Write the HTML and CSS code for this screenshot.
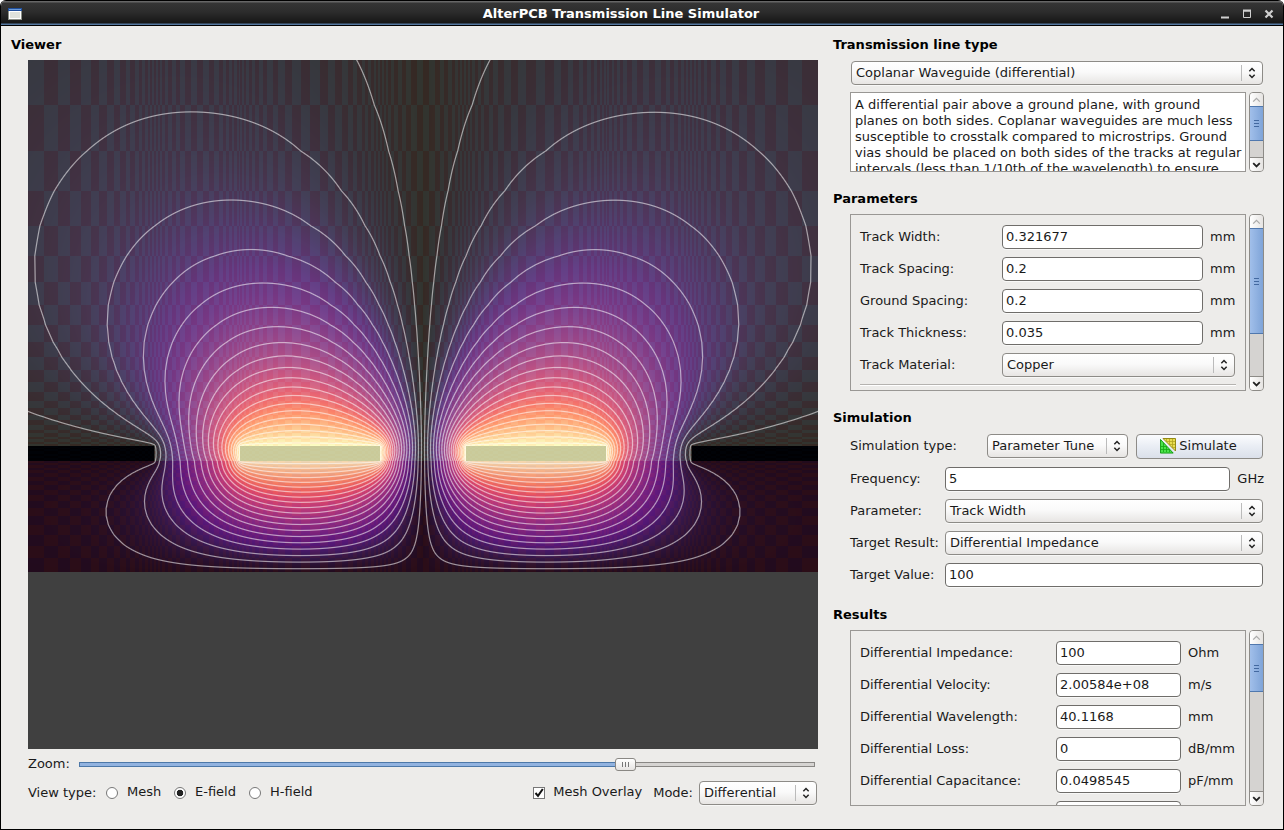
FILE: index.html
```html
<!DOCTYPE html>
<html lang="en">
<head>
<meta charset="utf-8">
<title>AlterPCB Transmission Line Simulator</title>
<link rel="stylesheet" href="styles.css">
</head>
<body>
<svg class="defs" width="0" height="0">
  <symbol id="updown" viewBox="0 0 9 14"><path d="M1.5 5 4.5 2 7.5 5M1.5 9 4.5 12 7.5 9" fill="none" stroke="#222" stroke-width="1.7"/></symbol>
  <symbol id="up" viewBox="0 0 9 6"><path d="M1.2 4.6 4.5 1.4 7.8 4.6" fill="none" stroke="#aaa" stroke-width="1.3"/></symbol>
  <symbol id="down" viewBox="0 0 9 6"><path d="M1.2 1.2 4.5 4.4 7.8 1.2" fill="none" stroke="#222" stroke-width="1.8"/></symbol>
</svg>
<div class="window">
  <header class="titlebar">
    <svg class="app-icon" width="14" height="12" viewBox="0 0 14 12"><rect width="14" height="12" fill="#8b8f86"/><rect width="14" height="3" fill="#1f4f9c"/><rect x="1" y="1" width="12" height="1" fill="#6c9ad8"/><rect x="1" y="3" width="12" height="8" fill="#fff"/><rect x="2" y="4" width="10" height="6" fill="#dfe2dc"/></svg>
    <h1 class="title">AlterPCB Transmission Line Simulator</h1>
    <svg class="win-buttons" width="54" height="12" viewBox="0 0 54 12"><path d="M1 9.5h8" stroke="#d0d0d0" stroke-width="2"/><path d="M23.5 3h7v6.500h-7z" fill="none" stroke="#d0d0d0"/><path d="M23 2.500h8" stroke="#d0d0d0" stroke-width="2"/><path d="M45.500 2.500l7 7M52.500 2.500l-7 7" stroke="#d0d0d0" stroke-width="2.200"/></svg>
  </header>
  <main class="content">
    <section class="left">
      <h2>Viewer</h2>
      <canvas id="field" class="viewer" width="790" height="689"></canvas>
      <div class="zoom-row"><span class="zoom-label">Zoom:</span>
        <div class="slider"><div class="slider-fill"></div><div class="slider-handle"><i></i><i></i><i></i></div><div class="slider-rest"></div></div>
      </div>
      <div class="view-row">
        <span class="view-label">View type:</span>
        <span class="radio"></span><span class="opt mesh">Mesh</span>
        <span class="radio on"></span><span class="opt efield">E-field</span>
        <span class="radio"></span><span class="opt">H-field</span>
        <span class="check"><svg width="12" height="12" viewBox="0 0 12 12"><path d="M2.500 6 5 8.800 9.800 2" fill="none" stroke="#111" stroke-width="2"/></svg></span>
        <span class="opt overlay">Mesh Overlay</span><span class="mode">Mode:</span>
        <div class="combo mode-combo"><span>Differential</span><svg><use href="#updown"/></svg></div>
      </div>
    </section>
    <section class="right">
      <h2>Transmission line type</h2>
      <div class="combo type-combo"><span>Coplanar Waveguide (differential)</span><svg><use href="#updown"/></svg></div>
      <div class="scroll-area desc-area">
        <div class="desc">A differential pair above a ground plane, with ground<br>planes on both sides. Coplanar waveguides are much less<br>susceptible to crosstalk compared to microstrips. Ground<br>vias should be placed on both sides of the tracks at regular<br>intervals (less than 1/10th of the wavelength) to ensure</div>
        <div class="scrollbar"><b><svg><use href="#up"/></svg></b><div class="thumb t1"><i></i><i></i><i></i></div><b class="end"><svg><use href="#down"/></svg></b></div>
      </div>
      <h2 class="h-params">Parameters</h2>
      <div class="scroll-area params-area">
        <div class="panel params">
          <div class="row"><label>Track Width:</label><span class="input">0.321677</span><em>mm</em></div>
          <div class="row"><label>Track Spacing:</label><span class="input">0.2</span><em>mm</em></div>
          <div class="row"><label>Ground Spacing:</label><span class="input">0.2</span><em>mm</em></div>
          <div class="row"><label>Track Thickness:</label><span class="input">0.035</span><em>mm</em></div>
          <div class="row"><label>Track Material:</label><div class="combo"><span>Copper</span><svg><use href="#updown"/></svg></div></div>
          <hr>
        </div>
        <div class="scrollbar"><b><svg><use href="#up"/></svg></b><div class="thumb t2"><i></i><i></i><i></i></div><b class="end"><svg><use href="#down"/></svg></b></div>
      </div>
      <h2 class="h-sim">Simulation</h2>
      <div class="sim">
        <div class="row first"><label>Simulation type:</label><div class="combo tune"><span>Parameter Tune</span><svg><use href="#updown"/></svg></div>
          <button class="simulate"><svg width="16" height="16" viewBox="0 0 16 16"><path d="M.5 1v14.500H15z" transform="translate(0 .5) scale(.88 .94)" fill="#4be24b" stroke="#0a960a"/><path d="M3 .500H15.500V13z" fill="#e8de50" stroke="#948a14"/><path d="M1 8.500h5M1 11.500h8M3.500 5v9M6.500 8v6M9.500 11v3" stroke="#12a812" stroke-width=".8"/><path d="M7 3.500h8M10 6.500h5M12 9.500h3M6.500 1v3M9.500 1v6M12.500 1v9" stroke="#b3a521" stroke-width=".8"/></svg>Simulate</button></div>
          <div class="row"><label>Frequency:</label><span class="input">5</span><em>GHz</em></div>
          <div class="row"><label>Parameter:</label><div class="combo"><span>Track Width</span><svg><use href="#updown"/></svg></div></div>
          <div class="row"><label>Target Result:</label><div class="combo"><span>Differential Impedance</span><svg><use href="#updown"/></svg></div></div>
          <div class="row"><label>Target Value:</label><span class="input">100</span></div>
      </div>
      <h2 class="h-results">Results</h2>
      <div class="scroll-area results-area">
        <div class="panel results">
          <div class="row"><label>Differential Impedance:</label><span class="input">100</span><em>Ohm</em></div>
          <div class="row"><label>Differential Velocity:</label><span class="input">2.00584e+08</span><em>m/s</em></div>
          <div class="row"><label>Differential Wavelength:</label><span class="input">40.1168</span><em>mm</em></div>
          <div class="row"><label>Differential Loss:</label><span class="input">0</span><em>dB/mm</em></div>
          <div class="row"><label>Differential Capacitance:</label><span class="input">0.0498545</span><em>pF/mm</em></div>
          <div class="row"><label></label><span class="input"></span></div>
        </div>
        <div class="scrollbar"><b><svg><use href="#up"/></svg></b><div class="thumb t3"><i></i><i></i><i></i></div><b class="end"><svg><use href="#down"/></svg></b></div>
      </div>
    </section>
  </main>
</div>
<script src="field.js"></script>
</body>
</html>
```
FILE: styles.css
```css
* { box-sizing: border-box; }
body { margin: 0; background: #fff; font: 13px/16px "DejaVu Sans", sans-serif; color: #1a1a1a; }
.defs { position: absolute; }
.window { width: 1284px; height: 830px; background: #edecea; border: 1px solid #000; border-top: 0; border-radius: 6px 6px 0 0; overflow: hidden; }
.titlebar { height: 26px; margin: 0 -1px; padding: 2px 10px 0 8px; display: flex; align-items: center; justify-content: space-between; background: linear-gradient(#000 0 1px, #666 1px 2px, #353535 3px, #2c2c2c 12px, #161616 23px, #54779f 24px 25px, #000 25px); }
.title { margin: 0; font-size: 13px; line-height: 16px; color: #fff; }
.win-buttons { display: block; }
.content { display: grid; grid-template-columns: 822px 1fr; height: 803px; }
h2 { margin: 0; font-size: 13px; line-height: 16px; color: #000; }
.left { padding: 11px 5px 0 10px; }
.left h2 { height: 23px; }
.viewer { display: block; margin-left: 17px; background: #404040; }
.zoom-row { display: flex; align-items: center; margin: 7px 0 0 17px; height: 17px; padding-right: 3px; }
.zoom-label { margin-bottom: 2px; }
.slider { flex: 1; display: flex; align-items: center; margin-left: 9px; }
.slider-fill { width: 536px; height: 5px; background: #92b3e0; border: 1px solid #4d78a8; border-right: 0; }
.slider-handle { width: 21px; height: 13px; border: 1px solid #8a8884; border-radius: 3px; background: linear-gradient(#fff, #e6e4e2); display: flex; justify-content: center; align-items: center; gap: 2px; }
.slider-handle i { width: 1px; height: 5px; background: #777; }
.slider-rest { flex: 1; height: 5px; border: 1px solid #898784; border-left: 0; background: #d6d4d2; }
.view-row { display: flex; align-items: center; height: 24px; margin: 8px 1px 0 17px; }
.view-label { width: 78px; }
.radio { width: 12px; height: 12px; border: 1px solid #777; border-radius: 50%; background: #fff; margin-bottom: 1px; }
.radio.on { background: radial-gradient(#222 0 3px, #fff 3.600px); }
.opt { margin: 0 0 2px 9px; }
.mesh { width: 47px; } .efield { width: 54px; }
.check { margin: 0 0 1px auto; width: 12px; height: 12px; border: 1px solid #777; background: #fff; display: flex; align-items: center; justify-content: center; }
.check svg { flex: none; }
.overlay { margin-left: 8px; }
.mode { margin: 0 6px 0 11px; }
.combo { height: 24px; border: 1px solid #8d8b87; border-radius: 4px; background: linear-gradient(#fff, #fafafa 45%, #e7e5e3); display: flex; align-items: center; justify-content: space-between; padding: 0 6px 0 4px; flex: 1; box-shadow: 0 1px 0 #f8f8f7; color: #1a1a1a; }
.combo svg { width: 15px; height: 16px; padding-left: 6px; border-left: 1px solid #bbb; overflow: visible; }
.mode-combo { flex: 0 0 118px; }
.right { padding: 11px 19px 0 10px; }
.type-combo { margin: 8px 1px 0 18px; }
.scroll-area { display: flex; gap: 3px; margin: 7px 0 0 17px; }
.desc-area { height: 80px; }
.desc { flex: 1; width: 0; border: 1px solid #999794; background: #fff; padding: 4px; overflow: hidden; white-space: nowrap; }
.scrollbar { width: 15px; flex: none; border: 1px solid #8d8b87; border-radius: 4px; background: #d5d3d1; display: flex; flex-direction: column; overflow: hidden; }
.scrollbar b { height: 13px; flex: none; display: flex; align-items: center; justify-content: center; background: linear-gradient(90deg, #fff, #e6e4e2); }
.scrollbar b svg { width: 9px; height: 6px; }
.scrollbar .end { margin-top: auto; border-top: 1px solid #8d8b87; height: 14px; }
.thumb { flex: none; border: 1px solid #5078ae; border-width: 1px 0; background: linear-gradient(90deg, #a1bfea, #7fa4d8); display: flex; flex-direction: column; gap: 2px; align-items: center; justify-content: center; }
.thumb i { width: 5px; height: 1px; background: #4369a0; }
.t1 { height: 35px; } .t2 { height: 106px; } .t3 { height: 48px; }
.h-params { margin-top: 19px; }
.scroll-area.params-area { height: 177px; margin-top: 7px; }
.panel { flex: 1; border: 1px solid #999794; padding: 10px 9px 0; overflow: hidden; display: flex; flex-direction: column; gap: 8px; }
.row { display: flex; align-items: center; height: 24px; flex: none; }
.row label { flex: none; width: 142px; color: #1a1a1a; }
.input { height: 24px; padding: 3px; border: 1px solid #6f6d6a; border-radius: 4px; background: #fff; flex: 1; box-shadow: 0 1px 0 #f8f8f7; }
.row em { font-style: normal; margin-left: 7px; }
.params .row em { width: 27px; margin-right: -1px; }
.params .combo { margin-right: 1px; }
.params hr { margin: -1px 0 0; border: 0; border-top: 1px solid #b5b3b0; border-bottom: 1px solid #fff; height: 2px; flex: none; width: 376px; }
.h-sim { margin-top: 19px; }
.sim { margin: 8px 1px 0 17px; display: flex; flex-direction: column; gap: 8px; }
.sim .row label { width: 95px; }
.sim .row.first { height: 25px; align-items: flex-start; }
.sim .row.first label { width: 137px; padding-top: 4px; }
.sim em { margin-right: -1px; }
.simulate { width: 127px; height: 25px; margin-left: 8px; padding: 0 2px 2px 0; border: 1px solid #8d8b87; border-radius: 4px; background: linear-gradient(#fbfcfe, #e9edf4 50%, #dbe0ea); font: inherit; color: #1a1a1a; display: flex; align-items: center; justify-content: center; gap: 3px; }
.tune { flex: 0 0 141px; }
.h-results { margin-top: 20px; }
.scroll-area.results-area { height: 176px; margin-top: 7px; }
.results .row label { width: 196px; }
.results .input { flex: 0 0 125px; }
```
FILE: field.js
```js
// Solves the Laplace equation for the coplanar pair on a graded mesh and paints
// potential, mesh overlay and equipotential lines.
(function () {
  var W = 790, H = 512;
  var T = 386, B = 401.3;
  var G0 = 126, A0 = 212.3, A1 = 352, C0 = 438, C1 = 577.7, G1 = 664;

  function grow(len, g, s) {
    var out = [0], p = 0;
    while (p < len) { p += s; s *= 1 + g; out.push(p); }
    var k = len / p;
    return out.map(function (v) { return v * k; });
  }
  function both(a, b) {
    var h = grow((b - a) / 2, 0.125, 1.8), out = [];
    h.forEach(function (v) { out.push(a + v); });
    for (var i = h.length - 2; i >= 0; i--) out.push(b - h[i]);
    return out;
  }
  function outward(a, visible, extra, sign, g, s0) {
    var h = grow(visible, g, s0), s = h[h.length - 1] - h[h.length - 2], p = visible;
    while (p < visible + extra) { s *= 1 + g; p += s; h.push(p); }
    return h.map(function (v) { return a + sign * v; });
  }
  function join() {
    var out = [];
    Array.prototype.forEach.call(arguments, function (arr) {
      arr.forEach(function (v) { if (!out.length || v > out[out.length - 1] + 0.01) out.push(v); });
    });
    return out;
  }
  var xs = join(outward(G0, G0, 900, -1, 0.125, 1.9).reverse(), both(G0, A0), both(A0, A1), both(A1, C0), both(C0, C1), both(C1, G1), outward(G1, W - G1, 900, 1, 0.125, 1.9));
  var ys = join(outward(T, 295, 1000, -1, 0.149, 1.88).reverse(), both(T, B), outward(B, H - B, 0, 1, 0.125, 1.9));
  var nx = xs.length, ny = ys.length, n = nx * ny;
  var V = new Float64Array(n), fixed = new Uint8Array(n), e = 0.02;
  for (var j = 0; j < ny; j++) for (var i = 0; i < nx; i++) {
    var k = j * nx + i, x = xs[i], y = ys[j], inY = y > T - e && y < B + e;
    if (j === ny - 1 || j === 0 || i === 0 || i === nx - 1) fixed[k] = 1;
    if (inY && (x < G0 + e || x > G1 - e)) fixed[k] = 1;
    if (inY && x > A0 - e && x < A1 + e) { fixed[k] = 1; V[k] = 1; }
    if (inY && x > C0 - e && x < C1 + e) { fixed[k] = 1; V[k] = -1; }
  }
  function eps(j) { return (ys[j] + ys[j + 1]) / 2 > B ? 4.5 : 1; }
  var cw = new Float64Array(n), ce = new Float64Array(n), cn = new Float64Array(n), cs = new Float64Array(n);
  for (j = 1; j < ny - 1; j++) for (i = 1; i < nx - 1; i++) {
    k = j * nx + i;
    var hw = xs[i] - xs[i - 1], he = xs[i + 1] - xs[i], hn = ys[j] - ys[j - 1], hs = ys[j + 1] - ys[j];
    var en = eps(j - 1), es = eps(j), v = (en * hn + es * hs) / 2;
    var a = v / hw, b = v / he, c = en * (hw + he) / 2 / hn, d = es * (hw + he) / 2 / hs, t = a + b + c + d;
    cw[k] = a / t; ce[k] = b / t; cn[k] = c / t; cs[k] = d / t;
  }
  for (var it = 0; it < 1500; it++) for (j = 1; j < ny - 1; j++) for (i = 1; i < nx - 1; i++) {
    k = j * nx + i;
    if (!fixed[k]) V[k] += 1.9 * (cw[k] * V[k - 1] + ce[k] * V[k + 1] + cn[k] * V[k - nx] + cs[k] * V[k + nx] - V[k]);
  }

  var MAP = [[0,0,4],[7,6,28],[21,14,54],[40,17,89],[62,15,114],[81,18,124],[101,26,128],[121,34,130],[140,41,129],[161,48,126],[183,55,121],[202,62,114],[222,73,104],[237,89,95],[247,112,92],[252,137,97],[254,159,109],[254,183,126],[254,207,146],[253,231,169],[252,253,191]];
  function colour(v) {
    var t = Math.min(Math.abs(v), 1) * 20, i = Math.min(19, Math.floor(t)), f = t - i;
    return [0, 1, 2].map(function (c) { return MAP[i][c] * (1 - f) + MAP[i + 1][c] * f; });
  }
  function index(arr) {
    return function (p) { var i = 0; while (i < arr.length - 2 && arr[i + 1] <= p) i++; return i; };
  }
  var fx = index(xs), fy = index(ys), col = [];
  for (i = 0; i < W; i++) col.push(fx(i + 0.5));
  var ctx = document.getElementById('field').getContext('2d');
  var img = ctx.createImageData(W, H);
  for (var py = 0; py < H; py++) {
    j = fy(py + 0.5);
    var hy = ys[j + 1] - ys[j], q = (py + 0.5 - ys[j]) / hy;
    for (var px = 0; px < W; px++) {
      i = col[px]; k = j * nx + i;
      var hx = xs[i + 1] - xs[i], p = (px + 0.5 - xs[i]) / hx;
      var v00 = V[k], v10 = V[k + 1], v01 = V[k + nx], v11 = V[k + nx + 1];
      var val = (v00 * (1 - p) + v10 * p) * (1 - q) + (v01 * (1 - p) + v11 * p) * q;
      var gx = ((v10 - v00) * (1 - q) + (v11 - v01) * q) / hx, gy = ((v01 - v00) * (1 - p) + (v11 - v10) * p) / hy;
      var g = Math.sqrt(gx * gx + gy * gy), rgb = colour(val);
      var xx = px + 0.5, yy = py + 0.5;
      var metal = yy > T && yy < B && (xx < G0 || xx > G1 || (xx > A0 && xx < A1) || (xx > C0 && xx < C1));
      var odd = (i + j) & 1;
      var m = metal ? (odd ? [0, 0, 0] : [0, 2, 4]) : yy > B ? (odd ? [43, 13, 20] : [34, 11, 26]) : (odd ? [53, 41, 32] : [50, 52, 43]);
      var lv = Math.floor(val * 20) + 0.5, line = 0;
      if (!metal && g > 1e-7) line = Math.max(0, Math.min(1, 1.1 - Math.abs(val - lv / 20) / g)) * 0.55;
      var o = (py * W + px) * 4;
      for (var ch = 0; ch < 3; ch++) {
        var base = rgb[ch] * 0.8 + m[ch];
        img.data[o + ch] = base + (255 - base) * line;
      }
      img.data[o + 3] = 255;
    }
  }
  ctx.putImageData(img, 0, 0);
})();
```
